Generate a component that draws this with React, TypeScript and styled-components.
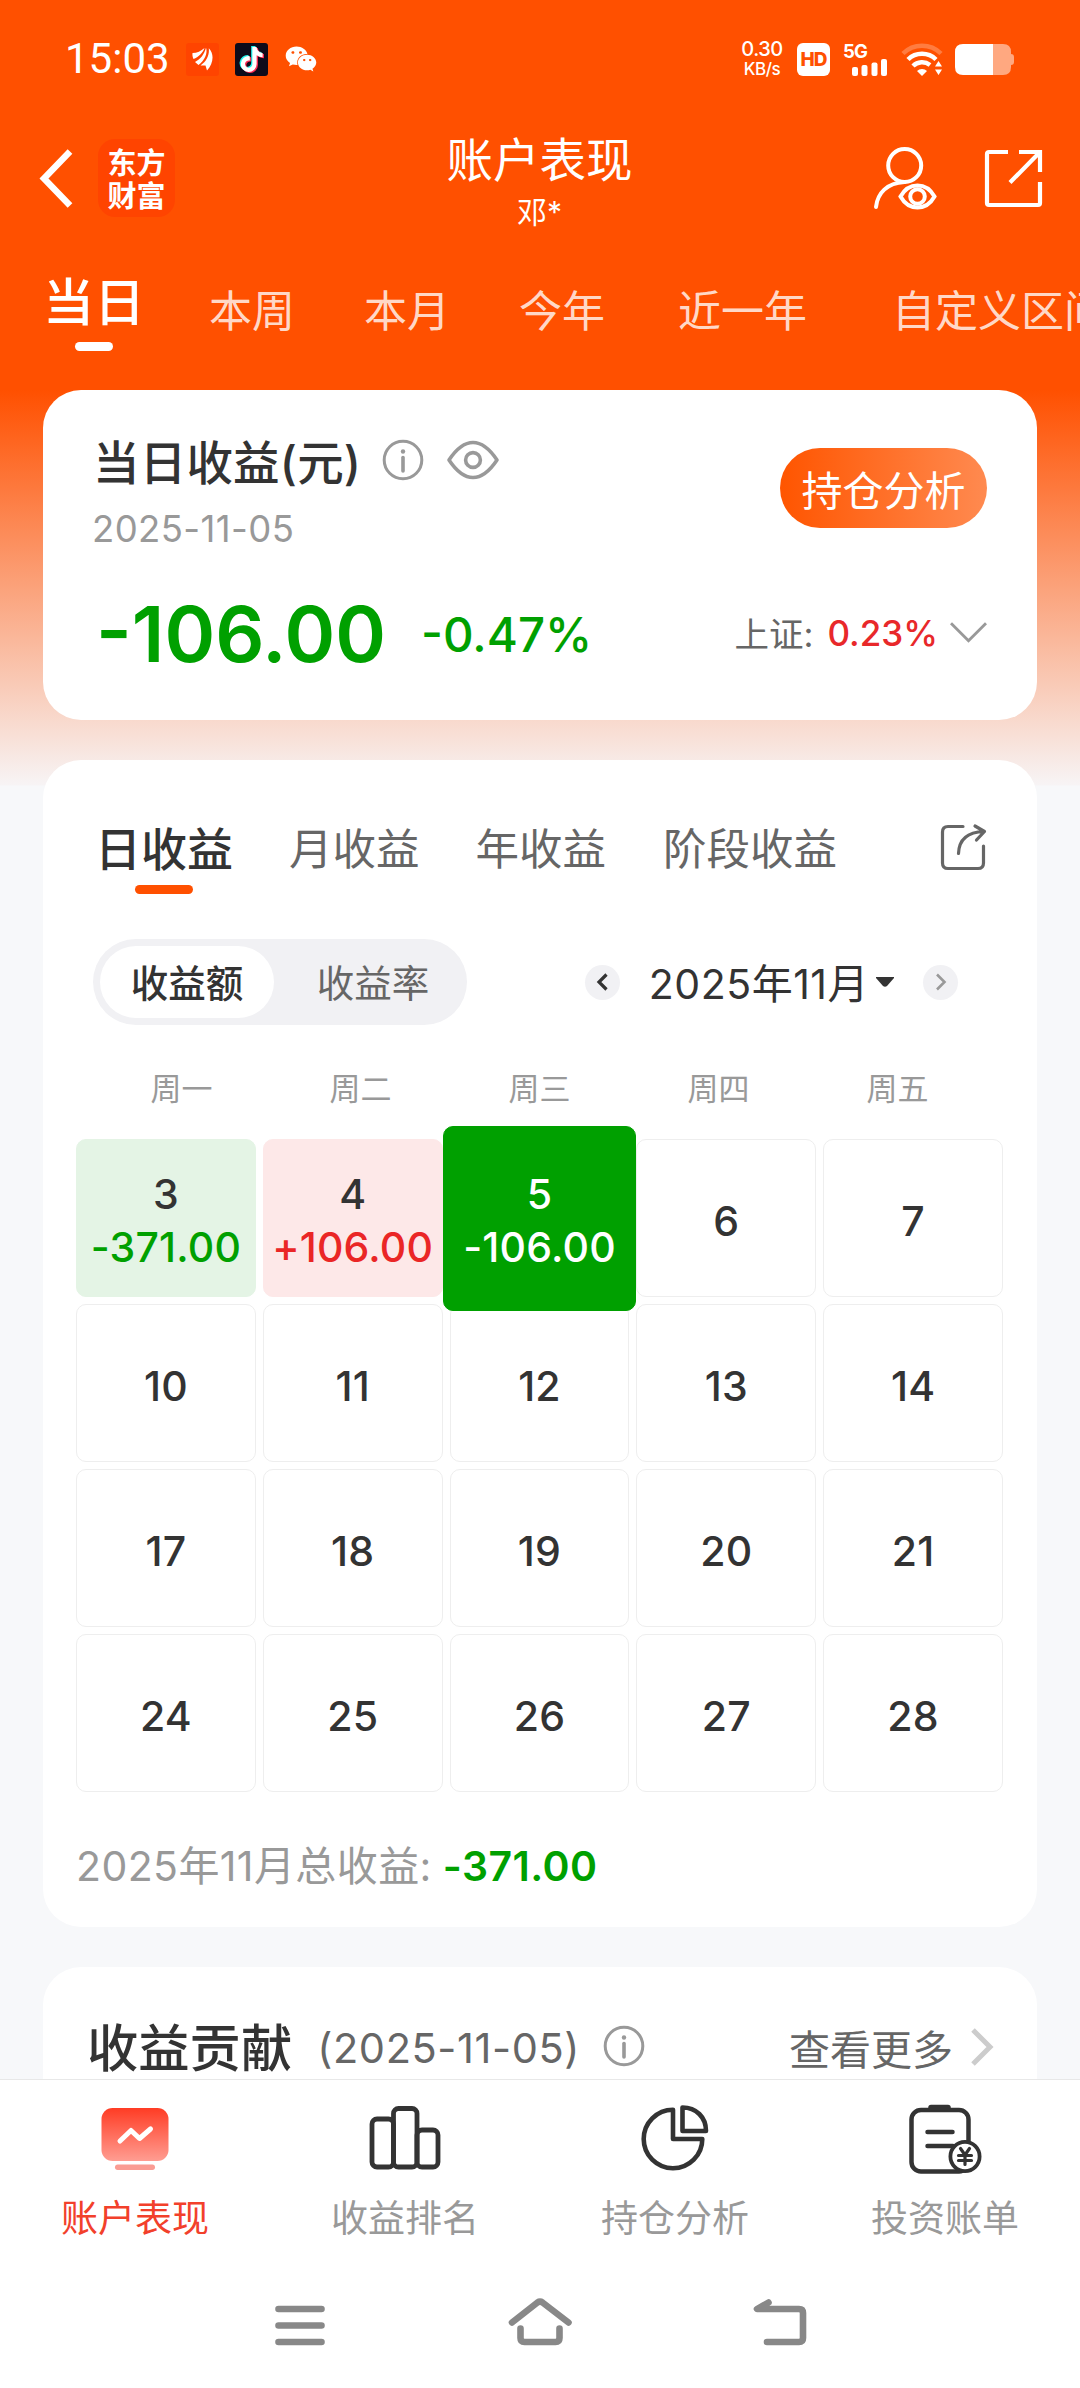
import React from "react";
import styled, { createGlobalStyle } from "styled-components";
import { FaTiktok, FaWeixin } from "react-icons/fa";

const GlobalStyle = createGlobalStyle`
  * { box-sizing: border-box; }
  body { margin: 0; background: #f7f8fa; }
  svg { display: block; flex: none; }
`;

const Screen = styled.div`
  width: 1080px;
  height: 2388px;
  display: flex;
  flex-direction: column;
  overflow: hidden;
  white-space: nowrap;
  color: #333;
  font-family: Inter, "Noto Sans CJK SC", sans-serif;
  background: linear-gradient(#ff5000 0, #ff5000 390px, #f7f4f5 785px, #f7f8fa 786px);
`;

/* ---------- status bar ---------- */

const StatusBar = styled.div`
  height: 118px;
  flex: none;
  display: flex;
  align-items: center;
  padding: 0 66px 0 65px;
  color: #fff;
`;

const Clock = styled.span`
  width: 121px;
  font: 400 42px/50px Roboto, sans-serif;
`;

const NoticeIcons = styled.div`
  display: flex;
  align-items: center;
  gap: 16px;
`;

const NoticeTile = styled.span<{ $bg: string }>`
  width: 33px;
  height: 33px;
  border-radius: 3px;
  background: ${(p) => p.$bg};
  display: grid;
  place-items: center;
`;

const StatusRight = styled.div`
  margin-left: auto;
  display: flex;
  align-items: center;
`;

const Speed = styled.div`
  display: flex;
  flex-direction: column;
  align-items: center;
  width: 44px;
  margin-right: 13px;
  font-family: Inter, sans-serif;
  font-weight: 500;
`;

const SpeedLine = styled.span<{ $size: number }>`
  font-size: ${(p) => p.$size}px;
  line-height: 20px;
  letter-spacing: -0.5px;
`;

const HdBadge = styled.span`
  width: 33px;
  height: 33px;
  border-radius: 6px;
  background: #fff;
  color: #ff5000;
  font: 800 19px/33px Inter, sans-serif;
  letter-spacing: -1px;
  text-align: center;
  margin-right: 13px;
`;

const Signal = styled.div`
  width: 45px;
  height: 33px;
  margin-right: 13px;
  display: flex;
  flex-direction: column;
`;

const SignalLabel = styled.span`
  font: 700 18.5px/17px Inter, sans-serif;
  height: 16px;
  letter-spacing: -0.8px;
`;

const BatterySlot = styled.span`
  margin-left: 12px;
`;

/* ---------- header ---------- */

const Header = styled.header`
  height: 120px;
  flex: none;
  display: grid;
  grid-template-columns: 1fr auto 1fr;
  padding: 0 34px 0 33px;
  color: #fff;
`;

const HeaderSide = styled.div<{ $end?: boolean }>`
  display: flex;
  align-items: center;
  justify-content: ${(p) => (p.$end ? "flex-end" : "flex-start")};
  gap: ${(p) => (p.$end ? 43 : 23)}px;
  padding-left: ${(p) => (p.$end ? 0 : 4)}px;
`;

const Brand = styled.div`
  width: 77px;
  height: 78px;
  border-radius: 17px;
  background: #ff4400;
  display: flex;
  flex-direction: column;
  align-items: center;
  justify-content: center;
  font: 700 29px/33px "Noto Sans CJK SC", sans-serif;
`;

const TitleBlock = styled.div`
  display: flex;
  flex-direction: column;
  align-items: center;
  padding-top: 15px;
`;

const PageTitle = styled.h1`
  margin: 0;
  font-size: 46.5px;
  font-weight: 400;
  line-height: 54px;
`;

const Owner = styled.span`
  margin-top: 5px;
  font-size: 30px;
  line-height: 40px;
`;

const PeriodTabs = styled.nav`
  height: 152px;
  flex: none;
  display: flex;
  align-items: flex-start;
  padding: 35px 0 0 43px;
  color: #fff;
  overflow: hidden;
`;

const Period = styled.div<{ $active?: boolean; $gap: number }>`
  flex: none;
  display: flex;
  flex-direction: column;
  align-items: center;
  margin-left: ${(p) => p.$gap}px;
  padding-top: ${(p) => (p.$active ? 0 : 8)}px;
  font-size: ${(p) => (p.$active ? 51 : 43)}px;
  font-weight: ${(p) => (p.$active ? 500 : 400)};
  line-height: 60px;
  color: ${(p) => (p.$active ? "#fff" : "rgba(255,255,255,0.8)")};
`;

const Underline = styled.i<{ $w: number; $color: string; $top: number }>`
  width: ${(p) => p.$w}px;
  height: 9px;
  border-radius: 5px;
  margin-top: ${(p) => p.$top}px;
  background: ${(p) => p.$color};
`;

/* ---------- cards ---------- */

const Content = styled.main`
  flex: 1;
  min-height: 0;
  overflow: hidden;
  padding: 0 43px;
  display: flex;
  flex-direction: column;
  gap: 40px;
`;

const Card = styled.section<{ $h: number; $pad: string }>`
  height: ${(p) => p.$h}px;
  flex: none;
  padding: ${(p) => p.$pad};
  border-radius: 38px;
  background: #fff;
  display: flex;
  flex-direction: column;
`;

const Row = styled.div`
  display: flex;
  align-items: center;
`;

const SummaryTop = styled.div`
  display: flex;
  justify-content: space-between;
  align-items: flex-start;
`;

const SummaryTitle = styled.h2`
  margin: 0 21px 0 0;
  font-size: 46.5px;
  font-weight: 500;
  line-height: 60px;
  letter-spacing: 0.2px;
`;

const SummaryDate = styled.div`
  margin: 16px 0 0 -1px;
  font-size: 36.5px;
  line-height: 40px;
  letter-spacing: 0.4px;
  color: #999;
`;

const SummaryIcons = styled.span`
  display: flex;
  gap: 22px;
  margin-bottom: 6px;
`;

const AnalysisButton = styled.button`
  width: 207px;
  height: 80px;
  margin: 15px 0 0;
  padding: 0;
  border: 0;
  border-radius: 40px;
  background: linear-gradient(90deg, #ff5500, #ff8a50);
  color: #fff;
  font: 400 41px/76px "Noto Sans CJK SC", sans-serif;
`;

const Figures = styled.div`
  height: 80px;
  margin-top: 45px;
  display: flex;
  align-items: center;
`;

const BigAmount = styled.span`
  width: 328px;
  padding-left: 3px;
  font-size: 77px;
  font-weight: 560;
  color: #00a000;
`;

const Percent = styled.span`
  font-size: 47.5px;
  font-weight: 500;
  color: #00a000;
`;

const IndexPick = styled.div`
  margin-left: auto;
  padding-bottom: 4px;
  display: flex;
  align-items: center;
  font-size: 35px;
  color: #666;
`;

const IndexName = styled.span`
  font-size: 34.5px;
`;

const IndexRate = styled.span`
  margin: 2px 12px 0 14px;
  font-weight: 500;
  color: #e8282a;
`;

/* ---------- calendar card ---------- */

const RangeTabs = styled.div`
  height: 75px;
  display: flex;
  align-items: flex-start;
  padding: 0 10px 0 19px;
`;

const RangeTab = styled.div<{ $active?: boolean; $gap: number }>`
  display: flex;
  flex-direction: column;
  align-items: center;
  margin-left: ${(p) => p.$gap}px;
  font-size: ${(p) => (p.$active ? 46 : 43.5)}px;
  font-weight: ${(p) => (p.$active ? 500 : 400)};
  line-height: 60px;
  color: ${(p) => (p.$active ? "#333" : "#666")};
`;

const ShareSlot = styled.span`
  margin: 3px 5px 0 auto;
`;

const Controls = styled.div`
  margin-top: 45px;
  padding: 0 45px 0 17px;
  display: flex;
  align-items: center;
  justify-content: space-between;
`;

const Segment = styled.div`
  width: 374px;
  height: 86px;
  padding: 7px;
  border-radius: 43px;
  background: #f1f1f4;
  display: flex;
`;

const SegmentItem = styled.div<{ $active?: boolean }>`
  width: ${(p) => (p.$active ? 174 : 186)}px;
  padding-left: ${(p) => (p.$active ? 0 : 12)}px;
  border-radius: 36px;
  background: ${(p) => (p.$active ? "#fff" : "transparent")};
  color: ${(p) => (p.$active ? "#333" : "#666")};
  font-size: 37.5px;
  font-weight: ${(p) => (p.$active ? 500 : 400)};
  line-height: 75px;
  text-align: center;
`;

const MonthPicker = styled.div`
  display: flex;
  align-items: center;
`;

const RoundButton = styled.span`
  width: 35px;
  height: 35px;
  border-radius: 50%;
  background: #f1f1f4;
  display: grid;
  place-items: center;
`;

const MonthLabel = styled.span`
  margin: 3px 7px 0 29px;
  font-size: 41px;
  line-height: 50px;
  letter-spacing: 0.5px;
`;

const CaretSlot = styled.span`
  margin-right: 29px;
`;

const Weekdays = styled.div`
  margin: 44px 16px 0;
  display: grid;
  grid-template-columns: repeat(5, 1fr);
  font-size: 31px;
  line-height: 40px;
  text-align: center;
  color: #999;
`;

const Calendar = styled.div`
  margin-top: 30px;
  display: grid;
  grid-template-columns: repeat(5, 1fr);
  grid-auto-rows: 158px;
  gap: 7px;
`;

type Tone = "plain" | "loss" | "gain" | "selected";

const cellColors: Record<Tone, [string, string, string, string]> = {
  plain: ["#fff", "#eeeeee", "#333", "#333"],
  loss: ["#e4f4e5", "#e4f4e5", "#333", "#00a000"],
  gain: ["#fde8e8", "#fde8e8", "#333", "#ea2626"],
  selected: ["#00a000", "#00a000", "#fff", "#fff"],
};

const Cell = styled.div<{ $tone: Tone }>`
  display: flex;
  flex-direction: column;
  align-items: center;
  justify-content: center;
  padding-top: ${(p) => (p.$tone === "plain" ? 7 : 5)}px;
  border-radius: 10px;
  border: 1px solid ${(p) => cellColors[p.$tone][1]};
  background: ${(p) => cellColors[p.$tone][0]};
  color: ${(p) => cellColors[p.$tone][2]};
  font-size: 41px;
  font-weight: 500;
  line-height: 53px;
  letter-spacing: 0.2px;
  ${(p) => p.$tone === "selected" && "margin: -13px -7px -14px; padding-top: 4px; z-index: 1;"}
`;

const CellValue = styled.span<{ $tone: Tone }>`
  color: ${(p) => cellColors[p.$tone][3]};
`;

const MonthTotal = styled.div`
  margin-top: 49px;
  font-size: 41px;
  line-height: 50px;
  letter-spacing: 0.4px;
  color: #999;
`;

const TotalValue = styled.span`
  margin-left: 11px;
  font-weight: 600;
  color: #00a000;
`;

const ContribTitle = styled.h2`
  margin: 0 25px 0 0;
  font-size: 51.3px;
  font-weight: 500;
  line-height: 60px;
`;

const ContribDate = styled.span`
  margin-right: 23px;
  font-size: 41.5px;
  letter-spacing: 0.6px;
  color: #666;
`;

const ContribInfo = styled.span`
  margin-bottom: 4px;
`;

const More = styled.span`
  margin: 0 18px 2px auto;
  font-size: 41px;
  color: #666;
`;

const MoreArrow = styled.span`
  margin-bottom: 3px;
`;

/* ---------- bottom bars ---------- */

const TabBar = styled.nav`
  height: 181px;
  flex: none;
  border-top: 1px solid #e8e8e8;
  background: #fff;
  display: grid;
  grid-template-columns: repeat(4, 1fr);
`;

const TabItem = styled.div<{ $active?: boolean }>`
  display: flex;
  flex-direction: column;
  align-items: center;
  gap: 21px;
  padding-top: 22px;
  font-size: 37px;
  line-height: 48px;
  color: ${(p) => (p.$active ? "#f2402b" : "#999")};
`;

const SystemBar = styled.div`
  height: 128px;
  flex: none;
  background: #fff;
  display: flex;
  align-items: center;
  justify-content: center;
  gap: 170px;
`;

/* ---------- icons ---------- */

const InfoIcon = () => (
  <svg width="42" height="42" viewBox="0 0 42 42" fill="none" stroke="#999" strokeWidth="3">
    <circle cx="21" cy="21" r="18.8" />
    <path d="M21 18.5V32" strokeWidth="3.6" strokeLinecap="round" />
    <circle cx="21" cy="12.5" r="2.2" fill="#999" stroke="none" />
  </svg>
);

const EyeIcon = () => (
  <svg width="54" height="42" viewBox="0 0 54 42" fill="none" stroke="#999" strokeWidth="3.6" strokeLinejoin="round">
    <path d="M3 21C9 12 17 3.5 27 3.5S45 12 51 21C45 30 37 38.500 27 38.500S9 30 3 21Z" />
    <circle cx="27" cy="21" r="7.4" />
  </svg>
);

const EastIcon = () => (
  <svg width="22" height="24" viewBox="0 0 22 24" fill="#fff">
    <path d="M0.500 6C5 6 9 4 12.500 1C10.500 6.500 6.500 10 1.500 12C0.500 10 0.300 8 0.500 6Z" />
    <path d="M3 15C8.500 12 12 8 14 .8C16 6 12.500 14 6.500 18Z" />
    <path d="M8.500 18.500C15 14 17.500 8 16.800 1.200C22.500 7 21.500 16.500 15 23.500L13.500 18.500Z" />
  </svg>
);

const TikTokIcon = () => (
  <svg width="29" height="29" viewBox="0 0 29 29">
    <FaTiktok x="1" y="1" size={25} color="#25f4ee" />
    <FaTiktok x="3.500" y="3" size={25} color="#fe2c55" />
    <FaTiktok x="2.200" y="2" size={25} color="#fff" />
  </svg>
);

const SignalBars = () => (
  <svg width="45" height="17" viewBox="0 0 45 17" fill="#fff">
    <rect x="9" y="8" width="6" height="9" rx="2" />
    <rect x="18.500" y="6" width="6" height="11" rx="2" />
    <rect x="28.500" y="3.500" width="6" height="13.500" rx="2" />
    <rect x="38" y="0" width="6" height="17" rx="2" />
  </svg>
);

const WifiIcon = () => (
  <svg width="42" height="33" viewBox="0 0 42 33" fill="none" stroke="#fff" strokeWidth="4.500">
    <path d="M2 10.500A27 27 0 0 1 40 10.500" stroke="rgba(255,255,255,.25)" />
    <path d="M7 16.500A20 20 0 0 1 35 16.500" />
    <path d="M12 23A13 13 0 0 1 29 22" />
    <path d="M16 28A7 7 0 0 1 26 28L21 33Z" fill="#fff" stroke="none" />
    <path d="M37.500 18L41 23.500H34ZM37.500 32L41 26.500H34Z" fill="#fff" stroke="none" />
  </svg>
);

const BatteryIcon = () => (
  <svg width="59" height="31" viewBox="0 0 59 31">
    <path d="M37 0H48Q56 0 56 8V10Q59 10 59 13V18Q59 21 56 21V23Q56 31 48 31H37Z" fill="rgba(255,255,255,.5)" />
    <path d="M8 0H38V31H8Q0 31 0 23V8Q0 0 8 0Z" fill="#fff" />
  </svg>
);

const BackIcon = () => (
  <svg width="38" height="62" viewBox="0 0 38 62" fill="none" stroke="#fff" strokeWidth="6.500">
    <path d="M33 4.500L7 31.500L33 58.500" />
  </svg>
);

const UserEyeIcon = () => (
  <svg width="68" height="68" viewBox="2 -1 68 68" fill="none" stroke="#fff" strokeWidth="4" strokeLinecap="round">
    <circle cx="35.700" cy="20.500" r="16.500" />
    <path d="M7 62C8.500 48 18 38 35.500 37" />
    <path d="M31.500 51.500C36 43.500 42 40.500 48.500 40.500S61 43.500 65.500 51.500C61 59.500 55 62.500 48.500 62.500S36 59.500 31.500 51.500Z" />
    <circle cx="48.500" cy="51.500" r="7.300" />
  </svg>
);

const OpenIcon = () => (
  <svg width="64" height="64" viewBox="0 -1 64 64" fill="none" stroke="#fff" strokeWidth="4.200">
    <path d="M26 5H7Q5 5 5 7V56Q5 58 7 58H56Q58 58 58 56V35" />
    <path d="M37 5H58V25M58 5L28 35.500" />
  </svg>
);

const ShareIcon = () => (
  <svg width="50" height="50" viewBox="0 0 50 50" fill="none" stroke="#666" strokeWidth="3.200" strokeLinecap="round" strokeLinejoin="round">
    <path d="M25 4.500H10Q4.500 4.500 4.500 10V41Q4.500 46.500 10 46.500H40Q45.500 46.500 45.500 41V24" />
    <path d="M20.500 31.500C21 18 29 10 46 9.500M37 4L46.500 9.500L38.500 18" />
  </svg>
);

const PerformanceIcon = () => (
  <svg width="72" height="72" viewBox="0 0 72 72">
    <defs>
      <linearGradient id="screenFill" x1="0" y1="0" x2="0" y2="1">
        <stop offset="0" stopColor="#ff3c24" />
        <stop offset="1" stopColor="#ff9d92" />
      </linearGradient>
    </defs>
    <rect x="2.500" y="6" width="67" height="53" rx="11" fill="url(#screenFill)" />
    <rect x="16" y="62.500" width="40" height="5.500" rx="2.700" fill="#fa9c93" />
    <path d="M21 39L32 28.500L40.500 36.500L51.500 27" fill="none" stroke="#fff" strokeWidth="5" strokeLinecap="round" strokeLinejoin="round" />
  </svg>
);

const RankIcon = () => (
  <svg width="72" height="72" viewBox="0 0 72 72" fill="none" stroke="#333" strokeWidth="4.800">
    <rect x="3" y="17" width="21.500" height="48" rx="5" />
    <rect x="24.500" y="6.500" width="23.500" height="58.500" rx="5" />
    <rect x="48" y="28" width="21" height="37" rx="5" />
  </svg>
);

const PieIcon = () => (
  <svg width="72" height="72" viewBox="0 0 72 72" fill="none" stroke="#333" strokeWidth="4.600" strokeLinejoin="round">
    <path d="M34 7.700A29.300 29.300 0 1 0 63.300 37H34Z" />
    <path d="M43.500 5.500V29H67C67 15 57 5.500 43.500 5.500Z" />
  </svg>
);

const BillIcon = () => (
  <svg width="74" height="72" viewBox="-1 0 74 72" fill="none" stroke="#333" strokeWidth="4.500" strokeLinecap="round">
    <rect x="2.500" y="8" width="57" height="61.500" rx="9.500" />
    <path d="M22 5.500H39" strokeWidth="5.500" />
    <path d="M18.500 30H43.500M18.500 44H44" />
    <circle cx="56" cy="54.500" r="14.600" fill="#fff" strokeWidth="3.800" />
    <path d="M51.500 46.500L56 53L60.500 46.500M56 53V62.500M49.500 53.500H62.500M49.500 58.500H62.500" strokeWidth="3.200" />
  </svg>
);

const tabs: [string, React.ReactNode][] = [
  ["账户表现", <PerformanceIcon />],
  ["收益排名", <RankIcon />],
  ["持仓分析", <PieIcon />],
  ["投资账单", <BillIcon />],
];

const days: { day: number; tone: Tone; value?: string }[] = [
  { day: 3, tone: "loss", value: "-371.00" },
  { day: 4, tone: "gain", value: "+106.00" },
  { day: 5, tone: "selected", value: "-106.00" },
  ...[6, 7, 10, 11, 12, 13, 14, 17, 18, 19, 20, 21, 24, 25, 26, 27, 28].map((day) => ({ day, tone: "plain" as Tone })),
];

export default function App() {
  return (
    <Screen>
      <GlobalStyle />
      <StatusBar>
        <Clock>15:03</Clock>
        <NoticeIcons>
          <NoticeTile $bg="#ff4400"><EastIcon /></NoticeTile>
          <NoticeTile $bg="#0d0b1a"><TikTokIcon /></NoticeTile>
          <NoticeTile $bg="transparent"><FaWeixin size={32} /></NoticeTile>
        </NoticeIcons>
        <StatusRight>
          <Speed>
            <SpeedLine $size={20}>0.30</SpeedLine>
            <SpeedLine $size={17}>KB/s</SpeedLine>
          </Speed>
          <HdBadge>HD</HdBadge>
          <Signal>
            <SignalLabel>5G</SignalLabel>
            <SignalBars />
          </Signal>
          <WifiIcon />
          <BatterySlot><BatteryIcon /></BatterySlot>
        </StatusRight>
      </StatusBar>

      <Header>
        <HeaderSide>
          <BackIcon />
          <Brand>
            <span>东方</span>
            <span>财富</span>
          </Brand>
        </HeaderSide>
        <TitleBlock>
          <PageTitle>账户表现</PageTitle>
          <Owner>邓*</Owner>
        </TitleBlock>
        <HeaderSide $end>
          <UserEyeIcon />
          <OpenIcon />
        </HeaderSide>
      </Header>

      <PeriodTabs>
        <Period $active $gap={0}>
          当日
          <Underline $w={38} $color="#fff" $top={9} />
        </Period>
        <Period $gap={64}>本周</Period>
        <Period $gap={69}>本月</Period>
        <Period $gap={69}>今年</Period>
        <Period $gap={73}>近一年</Period>
        <Period $gap={85}>自定义区间</Period>
      </PeriodTabs>

      <Content>
        <Card $h={330} $pad="43px 50px 0">
          <SummaryTop>
            <div>
              <Row>
                <SummaryTitle>当日收益(元)</SummaryTitle>
                <SummaryIcons>
                  <InfoIcon />
                  <EyeIcon />
                </SummaryIcons>
              </Row>
              <SummaryDate>2025-11-05</SummaryDate>
            </div>
            <AnalysisButton>持仓分析</AnalysisButton>
          </SummaryTop>
          <Figures>
            <BigAmount>-106.00</BigAmount>
            <Percent>-0.47%</Percent>
            <IndexPick>
              <IndexName>上证:</IndexName>
              <IndexRate>0.23%</IndexRate>
              <svg width="37" height="24" viewBox="0 0 38 24" fill="none" stroke="#999" strokeWidth="3">
                <path d="M1 3L19 21L37 3" />
              </svg>
            </IndexPick>
          </Figures>
        </Card>

        <Card $h={1167} $pad="59px 34px 0 33px">
          <RangeTabs>
            <RangeTab $active $gap={0}>
              日收益
              <Underline $w={58} $color="#ff5000" $top={6} />
            </RangeTab>
            <RangeTab $gap={56}>月收益</RangeTab>
            <RangeTab $gap={56}>年收益</RangeTab>
            <RangeTab $gap={57}>阶段收益</RangeTab>
            <ShareSlot><ShareIcon /></ShareSlot>
          </RangeTabs>
          <Controls>
            <Segment>
              <SegmentItem $active>收益额</SegmentItem>
              <SegmentItem>收益率</SegmentItem>
            </Segment>
            <MonthPicker>
              <RoundButton>
                <svg width="12" height="18" viewBox="0 0 12 18" fill="none" stroke="#333" strokeWidth="3.200">
                  <path d="M10.500 1.500L3 9L10.500 16.500" />
                </svg>
              </RoundButton>
              <MonthLabel>2025年11月</MonthLabel>
              <CaretSlot>
                <svg width="18" height="10" viewBox="0 0 18 10" fill="#333">
                  <path d="M0 0H18V1L11 9Q9 10.500 7 9L0 1Z" />
                </svg>
              </CaretSlot>
              <RoundButton>
                <svg width="12" height="18" viewBox="0 0 12 18" fill="none" stroke="#999" strokeWidth="2.600">
                  <path d="M2 1.500L9.500 9L2 16.500" />
                </svg>
              </RoundButton>
            </MonthPicker>
          </Controls>
          <Weekdays>
            {["周一", "周二", "周三", "周四", "周五"].map((name) => (
              <span key={name}>{name}</span>
            ))}
          </Weekdays>
          <Calendar>
            {days.map(({ day, tone, value }) => (
              <Cell key={day} $tone={tone}>
                <span>{day}</span>
                {value && <CellValue $tone={tone}>{value}</CellValue>}
              </Cell>
            ))}
          </Calendar>
          <MonthTotal>
            2025年11月总收益:<TotalValue>-371.00</TotalValue>
          </MonthTotal>
        </Card>

        <Card $h={330} $pad="50px 42px 0 44px">
          <Row>
            <ContribTitle>收益贡献</ContribTitle>
            <ContribDate>(2025-11-05)</ContribDate>
            <ContribInfo><InfoIcon /></ContribInfo>
            <More>查看更多</More>
            <MoreArrow>
              <svg width="24" height="40" viewBox="0 0 24 40" fill="none" stroke="#ccc" strokeWidth="5">
                <path d="M2 3L19 20L2 37" />
              </svg>
            </MoreArrow>
          </Row>
        </Card>
      </Content>

      <TabBar>
        {tabs.map(([label, icon], i) => (
          <TabItem key={label} $active={i === 0}>
            {icon}
            <span>{label}</span>
          </TabItem>
        ))}
      </TabBar>

      <SystemBar>
        <svg width="70" height="54" viewBox="0 0 70 54" stroke="#888" strokeWidth="6.600" strokeLinecap="round">
          <path d="M13.500 12H56.500M13.500 28.500H56.500M13.500 45H56.500" />
        </svg>
        <svg width="70" height="54" viewBox="0 0 70 54" fill="none" stroke="#888" strokeWidth="6.600" strokeLinecap="round" strokeLinejoin="round">
          <path d="M7 25.500L32.500 5.500Q35 3.800 37.500 5.500L63.500 25.500" />
          <path d="M15.500 31.500V41Q15.500 45 19.500 45H50.500Q54.500 45 54.500 41V31.500" />
        </svg>
        <svg width="70" height="54" viewBox="0 0 70 54" fill="none" stroke="#888" strokeWidth="6.600" strokeLinecap="round" strokeLinejoin="round">
          <path d="M23.500 5.500L12 12H54Q58 12 58 16V41Q58 45 54 45H22" />
        </svg>
      </SystemBar>
    </Screen>
  );
}
